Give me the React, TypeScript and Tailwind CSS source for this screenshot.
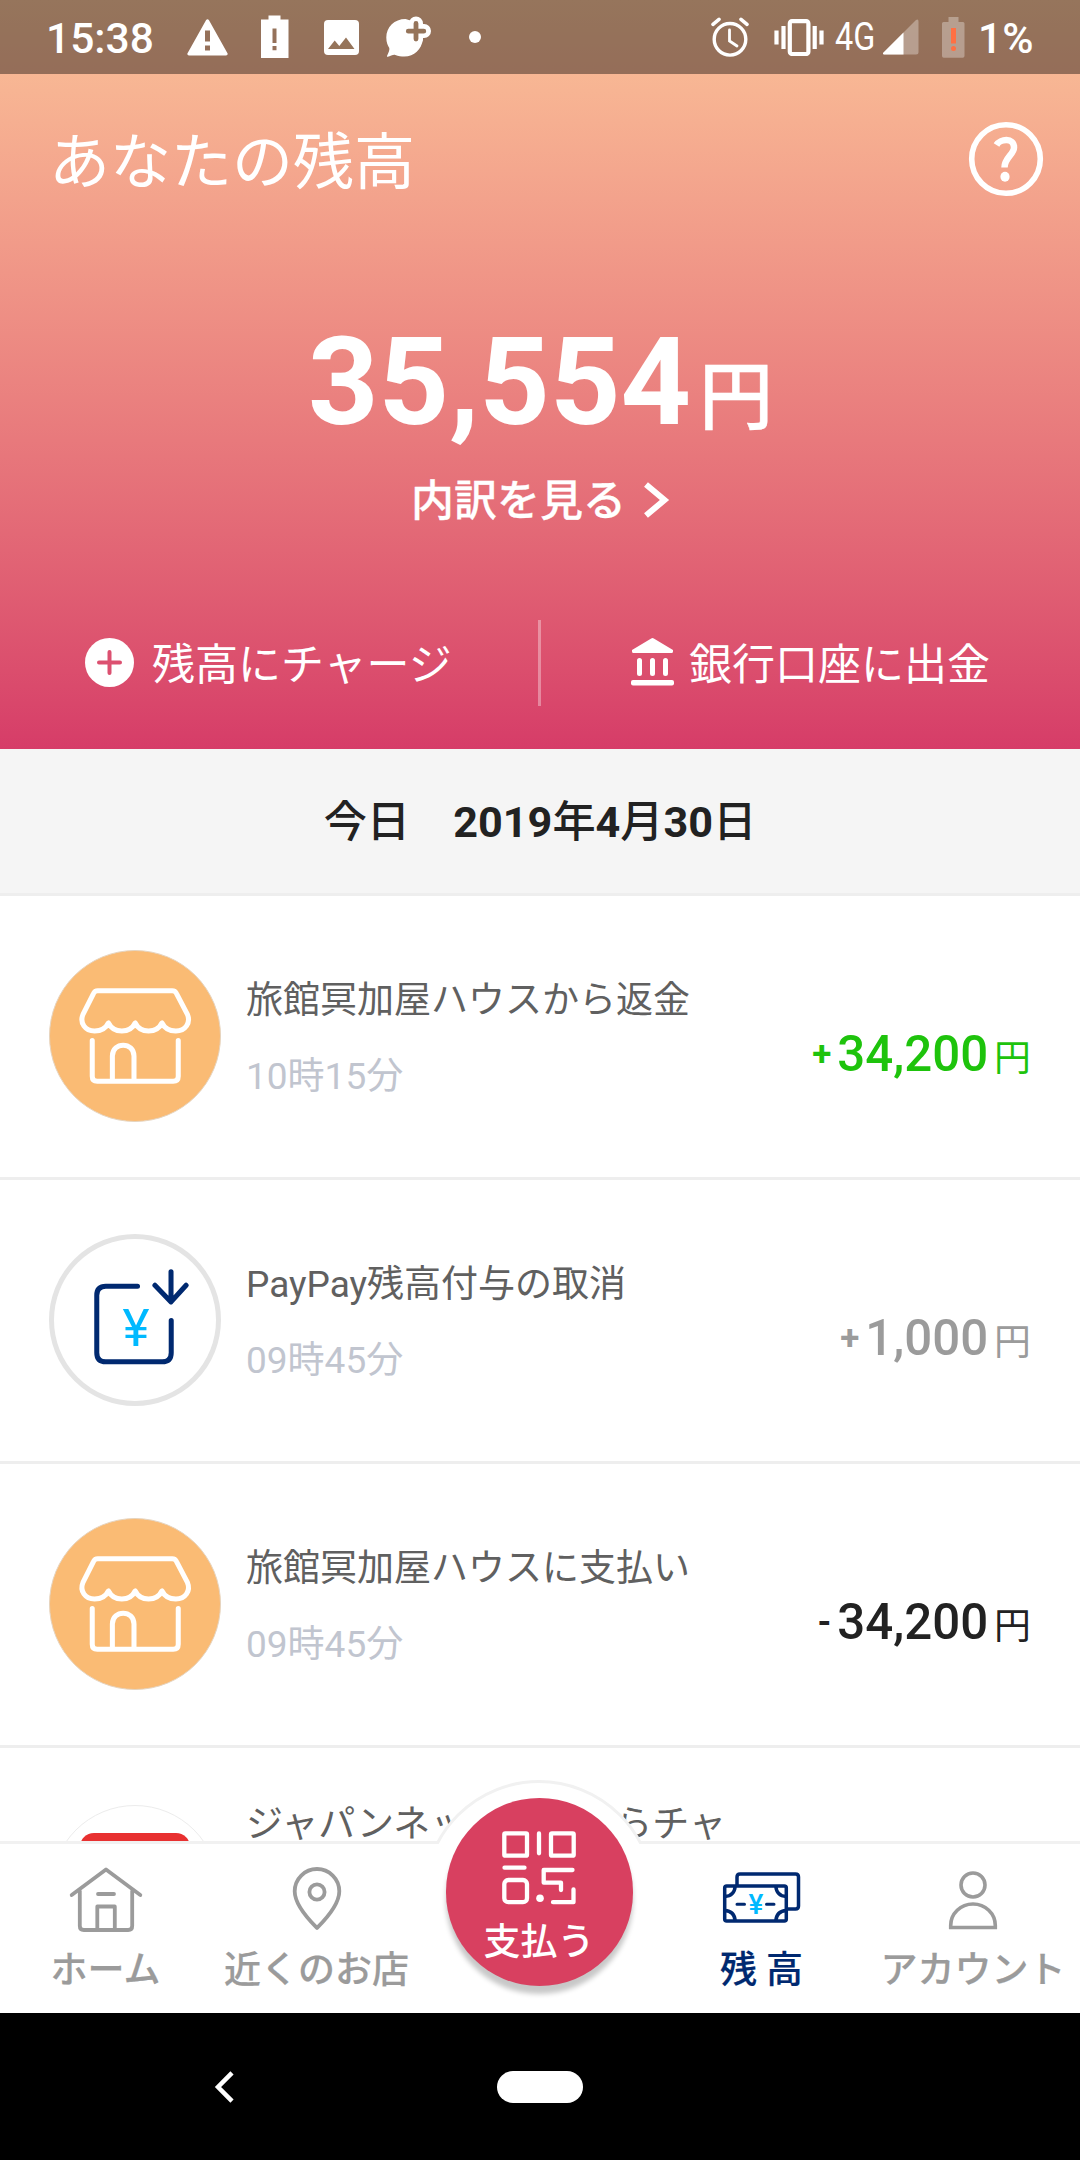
import React from 'react';

type Transaction = {
    title: string;
    time: string;
    sign: string;
    amount: string;
    color: string;
    icon: 'shop' | 'refund';
};

const transactions: Transaction[] = [
    { title: '旅館冥加屋ハウスから返金', time: '10時15分', sign: '+', amount: '34,200', color: 'text-[#1ec30c]', icon: 'shop' },
    { title: 'PayPay残高付与の取消', time: '09時45分', sign: '+', amount: '1,000', color: 'text-[#9b9b9b]', icon: 'refund' },
    { title: '旅館冥加屋ハウスに支払い', time: '09時45分', sign: '-', amount: '34,200', color: 'text-[#222222]', icon: 'shop' },
];

const StatusBar: React.FC = () => (
    <div className="h-[74px] shrink-0 bg-black/40 flex items-center text-white">
        <span className="ml-[46px] w-[141px] pt-[4px] text-[42.500px] leading-[70px] font-medium">15:38</span>
        <svg className="shrink-0" width="41" height="37" viewBox="0 0 41 37">
            <path fill="#fff" fillRule="evenodd" d="M19 1.2Q20.5-.8 22 1.2L40.6 34.5Q41 36.5 39 36.5H2Q0 36.5.4 34.5ZM18 11.5v11h5v-11ZM18 26.500v5h5v-5Z" />
        </svg>
        <svg className="ml-[32px] shrink-0" width="29" height="44" viewBox="0 0 29 44">
            <path fill="#fff" fillRule="evenodd" d="M8.500 0.500h12v4h8V43H1V4.500h7.500ZM12.500 13.500v14.500h4V13.500ZM12.500 31v4.200h4V31Z" />
        </svg>
        <svg className="ml-[35px] shrink-0" width="35" height="35" viewBox="0 0 35 35">
            <rect width="35" height="35" rx="4" fill="#fff" />
            <path fill="#95745a" d="M4 29 10.700 20.500 15.300 26 22 17.500 30.500 29Z" />
        </svg>
        <svg className="ml-[27px] shrink-0" width="46" height="42" viewBox="0 0 46 42">
            <path fill="#fff" d="M19.500 3C8.500 3 .3 11 .3 21.500c0 5 1.500 8 3 10.500.5 2-1 5-2.300 8-.2.700.3 1 .8.800 2.700-.5 5.500-2.500 7.500-1.800 3 1.200 6 1.500 9 1.500 10 0 17-7 18.700-17L36 8Z" />
            <path stroke="#fff" strokeWidth="14" strokeLinecap="round" d="M30 7.500v15M22 15h16" />
            <path stroke="#95745a" strokeWidth="4.800" strokeLinecap="round" d="M30 7.500v15.500M22.300 15.200h15.500" />
        </svg>
        <span className="ml-[37px] size-[12px] rounded-full bg-white" />

        <svg className="ml-[230px] shrink-0" width="38" height="40" viewBox="0 0 38 40" fill="none" stroke="#fff" strokeLinecap="round">
            <circle cx="19" cy="22.300" r="15.800" strokeWidth="3.400" />
            <path strokeWidth="2.800" d="M18.500 13v11l7.500 5" />
            <path strokeWidth="3.600" d="m2 7.300 6-5M36 7.300l-6-5" />
        </svg>
        <svg className="ml-[25px] shrink-0" width="50" height="37" viewBox="0 0 50 37" fill="none" stroke="#fff">
            <rect x="15.800" y="2.200" width="18.600" height="32.800" rx="2.200" strokeWidth="4.200" />
            <path strokeWidth="4.200" d="M2.500 11.500v14M9.500 7v23M47.500 11.500v14M40.700 7v23" />
        </svg>
        <span className="ml-[11px] w-[48px] text-[39.500px] leading-[72px] origin-left scale-x-[0.82]">4G</span>
        <svg className="shrink-0" width="36" height="36" viewBox="0 0 36 36">
            <path fill="#fff" fillOpacity=".32" d="M0 34 33 1q2.500-1.500 2.500 1.500V33q0 2.500-2.500 2.500H1Q-1 35 0 34Z" />
            <path fill="#fff" d="M0 34 20.500 13.500v22H1Q-1 35 0 34Z" />
        </svg>
        <svg className="ml-[23px] shrink-0" width="23" height="41" viewBox="0 0 23 41">
            <path fill="#fff" fillOpacity=".32" d="M6.500 0h10v5h4.500q1.500 0 1.500 1.500v32.500q0 1.800-1.800 1.800H1.800Q0 40.800 0 39V6.500Q0 5 1.500 5h5Z" />
            <path fill="#ff7043" d="M9 11h5v15.500H9z" />
            <circle cx="11.500" cy="31.500" r="2.500" fill="#ff7043" />
        </svg>
        <span className="ml-[13px] pt-[4px] text-[42.500px] leading-[70px] font-medium">1%</span>
    </div>
);

const ShopIcon: React.FC = () => (
    <div className="size-[172px] rounded-full bg-[#fabb74] border border-[#e6d4bf] shrink-0">
        <svg viewBox="1 1 169 169" fill="none" stroke="#fff" strokeWidth="5" strokeLinecap="round" strokeLinejoin="round">
            <path d="M48.500 40.500h74q3 0 4.300 2.800l10.800 20.700c3.500 8.500-2 16.500-11.500 16.500-6.500 0-11.500-3-13.800-8-2.300 5-7.500 8-13.300 8s-11-3-13.300-8c-2.300 5-7.500 8-13.300 8s-11-3-13.300-8c-2.300 5-7.300 8-13.800 8-9.500 0-15-8-11.500-16.500L44.200 43.300q1.300-2.800 4.300-2.800Z" />
            <path d="M43 90v35.500q0 5 5 5h75.500q5 0 5-5V90M63 130V105.500c0-14.500 21.500-14.500 21.500 0V130" />
        </svg>
    </div>
);

const RefundIcon: React.FC = () => (
    <div className="size-[172px] rounded-full bg-white border-[5px] border-[#e4e4e4] shrink-0">
        <svg viewBox="5 5 161 161" fill="none" stroke="#002970" strokeWidth="5" strokeLinecap="round" strokeLinejoin="round">
            <path d="M88 52H56.500q-9 0-9 9v57q0 9 9 9h56q9 0 9-9V86M121.300 37.500v29M105.300 51l16 16.500 15-16.500" />
            <text x="86.500" y="111" textAnchor="middle" fontSize="51" fill="#00b9ff" stroke="none">¥</text>
        </svg>
    </div>
);

const HomeIcon: React.FC = () => (
    <svg width="78" height="70" viewBox="0 0 78 70" fill="none" stroke="currentColor" strokeWidth="3.800" strokeLinecap="round" strokeLinejoin="round">
        <path d="M4.700 31 39 5.500 73.300 31M12.800 27v35q0 4 4 4h44.400q4 0 4-4V27M30.300 65V42.500h17.500V65M31 30h16" />
    </svg>
);

const PinIcon: React.FC = () => (
    <svg width="56" height="70" viewBox="0 0 56 70" fill="none" stroke="currentColor" strokeWidth="3.800" strokeLinejoin="round">
        <path d="M28 64C22.500 58.500 5.700 42 5.700 27.300a22.300 22.300 0 0 1 44.600 0C50.300 42 33.500 58.500 28 64Z" />
        <circle cx="28" cy="28" r="7.600" />
    </svg>
);

const WalletIcon: React.FC = () => (
    <svg width="83" height="58" viewBox="0 0 83 58" fill="none" stroke="#002970" strokeWidth="3.500" strokeLinejoin="round">
        <path d="M17 17V8q0-3 3-3h55.500q3 0 3 3v29q0 3-3 3h-9" />
        <rect x="4.700" y="17" width="61.600" height="35" rx="2" />
        <path d="M4.700 27.500Q14.500 27 15.200 17M66.300 27.500Q56.500 27 55.800 17M4.700 41.500Q14.500 42 15.200 52M66.300 41.500Q56.500 42 55.800 52" />
        <path strokeWidth="3" strokeLinecap="round" d="M17 35.300h7.500M46.500 35.300h7.500" />
        <text x="36" y="45" textAnchor="middle" fontSize="28" fontWeight="500" fill="#00b9ff" stroke="none">¥</text>
    </svg>
);

const PersonIcon: React.FC = () => (
    <svg width="56" height="64" viewBox="0 0 56 64" fill="none" stroke="currentColor" strokeWidth="3.600">
        <circle cx="28" cy="17" r="12" />
        <path d="M5.700 59.500v-2a22.300 21.500 0 0 1 44.600 0v2Z" />
    </svg>
);

const QrIcon: React.FC = () => (
    <svg width="74" height="74" viewBox="0 0 74 74" fill="none" stroke="#fff" strokeWidth="4.300" strokeLinecap="round" strokeLinejoin="round">
        <rect x="2.300" y="2.300" width="22.700" height="22.400" rx="1" />
        <rect x="49" y="2.300" width="22.700" height="22.400" rx="1" />
        <rect x="2.300" y="49" width="22.700" height="22.200" rx="4" />
        <path d="M37 2.500v19.800M2.500 36.700h20M70.500 39H41.700v12.700H59V59M71.500 58.500v12.700H51" />
        <circle cx="38" cy="67.300" r="3.800" fill="#fff" stroke="none" />
    </svg>
);

const Header: React.FC = () => (
    <header className="h-[749px] flex flex-col bg-gradient-to-b from-[#fac399] to-[#d63c68] text-white">
        <StatusBar />
        <div className="h-[170px] pl-[49px] pr-[36px] flex items-center justify-between">
            <h1 className="pt-[10px] text-[61px]">あなたの残高</h1>
            <svg width="76" height="76" viewBox="0 0 76 76" fill="none" stroke="#fff">
                <circle cx="38" cy="38" r="34.300" strokeWidth="5.600" />
                <path strokeWidth="6.500" d="M28.500 24C32 18 46 16 46 26.500c0 7-9.500 10-9.500 20" />
                <ellipse cx="37" cy="55.800" rx="4.600" ry="5" fill="#fff" stroke="none" />
            </svg>
        </div>
        <div className="mt-[68px] pl-[1px] h-[140px] flex justify-center items-baseline leading-[140px]">
            <span className="text-[123px] font-bold">35,554</span>
            <span className="ml-[8px] text-[74px] font-medium relative -top-[1px] [-webkit-text-stroke:0.4px_white]">円</span>
        </div>
        <div className="mt-[19px] pl-[2px] h-[60px] flex justify-center items-center">
            <span className="text-[43px] leading-[60px] font-medium [-webkit-text-stroke:0.3px_white]">内訳を見る</span>
            <svg className="ml-[15px] -mt-[2px]" width="30" height="40" viewBox="0 0 30 40" fill="none" stroke="#fff" strokeWidth="6">
                <path d="m5 4.500 18.500 15.500L5 35.500" />
            </svg>
        </div>
        <div className="mt-[89px] h-[86px] flex">
            <div className="w-[538px] pl-[85px] flex items-center">
                <svg className="-mt-[2px]" width="49" height="49" viewBox="0 0 49 49">
                    <circle cx="24.500" cy="24.500" r="24.500" fill="#fff" />
                    <path stroke="#dc5070" strokeWidth="4" strokeLinecap="round" d="M24.500 14v21M14 24.500h21" />
                </svg>
                <span className="ml-[18px] pt-[4px] text-[43px]">残高にチャージ</span>
            </div>
            <div className="w-[3px] bg-white/35" />
            <div className="flex-1 pl-[90px] flex items-center">
                <svg className="-mt-[2px]" width="43" height="48" viewBox="0 0 43 48" fill="#fff">
                    <path d="M20.200.500q1.300-.8 2.600 0L42 12v1.500q0 1.500-1.500 1.500h-38Q1 15 1 13.500V12Z" />
                    <rect y="42" width="43" height="5.500" rx="2" />
                    <path stroke="#fff" strokeWidth="5" strokeLinecap="round" d="M8.500 22.500v13M21.500 22.500v13M34.500 22.500v13" />
                </svg>
                <span className="ml-[15px] pt-[4px] text-[43px]">銀行口座に出金</span>
            </div>
        </div>
    </header>
);

const TransactionRow: React.FC<{ item: Transaction }> = ({ item }) => (
    <li className="h-[284px] border-b-[3px] border-[#eeeeee] pl-[49px] pr-[49px] flex">
        <div className="mt-[54px]">
            {item.icon === 'shop' ? <ShopIcon /> : <RefundIcon />}
        </div>
        <div className="ml-[25px] flex-1">
            <p className="mt-[77px] text-[37px] leading-[56px] text-[#606060]">{item.title}</p>
            <p className="mt-[20px] text-[37px] leading-[56px] text-[#c1c5cf]">{item.time}</p>
        </div>
        <div className={`mt-[128px] h-[60px] flex items-baseline leading-[60px] ${item.color}`}>
            <span className="text-[35px] font-bold relative -top-[5px]">{item.sign}</span>
            <span className="ml-[6px] text-[49.200px] font-medium">{item.amount}</span>
            <span className="ml-[6px] text-[36.900px]">円</span>
        </div>
    </li>
);

const BottomNav: React.FC = () => (
    <nav className="relative h-[172px] bg-white border-t-[3px] border-[#f1f1f1] pr-[2px] flex text-[37px] leading-[50px] font-medium text-[#9b9b9b]">
        {/* ring behind the pay button, only its cap shows above the bar */}
        <div className="absolute left-[423px] -top-[64px] w-[232px] h-[64px] overflow-hidden">
            <div className="size-[232px] rounded-full bg-white border-[3px] border-[#f1f1f1]" />
        </div>
        <div className="flex-1 pt-[20px] flex flex-col items-center">
            <HomeIcon />
            <span className="mt-[12px] [-webkit-text-stroke:0.2px]">ホーム</span>
        </div>
        <div className="flex-1 pt-[20px] flex flex-col items-center">
            <PinIcon />
            <span className="mt-[12px] whitespace-nowrap [-webkit-text-stroke:0.2px]">近くのお店</span>
        </div>
        <div className="w-[234px] flex justify-center">
            <button className="relative -mt-[46px] w-[187px] h-[188px] rounded-full bg-[#d84060] text-white shadow-[0_8px_5px_rgba(0,0,0,0.22)] flex flex-col items-center">
                <div className="mt-[33px]">
                    <QrIcon />
                </div>
                <span className="mt-[13px]">支払う</span>
            </button>
        </div>
        <div className="flex-1 pt-[25px] flex flex-col items-center text-[#002970]">
            <WalletIcon />
            <span className="mt-[19px] [-webkit-text-stroke:0.2px]">残 高</span>
        </div>
        <div className="flex-1 pt-[24px] flex flex-col items-center">
            <PersonIcon />
            <span className="mt-[14px] pl-[1px] whitespace-nowrap [-webkit-text-stroke:0.2px]">アカウント</span>
        </div>
    </nav>
);

export default function App() {
    return (
        <div className="w-[1080px] h-[2160px] overflow-hidden flex flex-col bg-white font-['Roboto','Noto_Sans_CJK_JP',sans-serif]">
            <Header />
            <div className="h-[147px] bg-[#f5f5f5] border-b-[3px] border-[#eeeeee] text-center text-[43.200px] leading-[148px] font-medium text-[#222222] shrink-0">
                今日　<span className="font-bold">2019</span>年<span className="font-bold">4</span>月<span className="font-bold">30</span>日
            </div>
            <ul className="h-[945px] overflow-hidden shrink-0">
                {transactions.map((item, idx) => (
                    <TransactionRow key={idx} item={item} />
                ))}
                {/* Next entry, cut off by the tab bar */}
                <li className="h-[93px] pl-[49px] flex overflow-hidden">
                    <div className="mt-[57px] ml-[2px] mr-[2px] size-[168px] shrink-0 rounded-full border border-[#ececec] flex justify-center">
                        <div className="mt-[27px] w-[110px] h-[110px] rounded-[14px] bg-[#e83030]" />
                    </div>
                    <p className="ml-[25px] mt-[60px] h-[33px] text-[37px] leading-[34px] whitespace-nowrap text-[#606060]">ジャパンネット銀行からチャ</p>
                </li>
            </ul>
            <BottomNav />
            <div className="h-[147px] shrink-0 bg-black flex items-center pl-[214px]">
                <svg width="20" height="32" viewBox="0 0 20 32" fill="none" stroke="#fff" strokeWidth="4.500">
                    <path d="M18 1.800 4 16l14 14.200" />
                </svg>
                <div className="ml-[263px] w-[86px] h-[32px] rounded-full bg-white" />
            </div>
        </div>
    );
}
